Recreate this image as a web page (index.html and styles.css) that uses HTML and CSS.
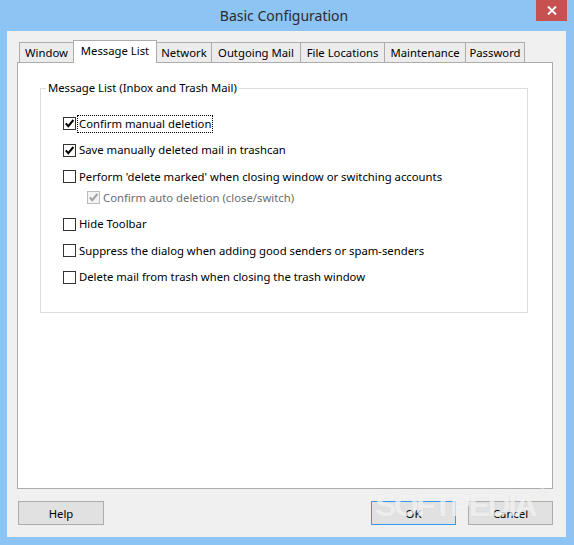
FILE: index.html
```html
<!DOCTYPE html>
<html>
<head>
<meta charset="utf-8">
<link rel="stylesheet" href="styles.css">
</head>
<body>
<div class="window">
  <div class="titlebar">
    <div class="title">Basic Configuration</div>
    <div class="close">
      <svg width="10" height="9" viewBox="0 0 10 9"><path d="M1 0.5 L9 8.5 M9 0.5 L1 8.5" stroke="#fff" stroke-width="2"/></svg>
    </div>
  </div>
  <div class="client">
    <div class="tabs">
      <div class="tab t-window">Window</div>
      <div class="tab selected t-msg">Message List</div>
      <div class="tab t-net">Network</div>
      <div class="tab t-out">Outgoing Mail</div>
      <div class="tab t-file">File Locations</div>
      <div class="tab t-maint">Maintenance</div>
      <div class="tab t-pass">Password</div>
    </div>
    <div class="panel">
      <fieldset class="group">
        <legend>Message List (Inbox and Trash Mail)</legend>
        <div class="rows">
          <div class="row">
            <span class="cb checked"><svg width="11" height="11" viewBox="0 0 11 11"><path d="M1.8 5.4 L4.3 8.2 L9.4 2" fill="none" stroke="#000" stroke-width="2"/></svg></span>
            <span class="label focus">Confirm manual deletion</span>
          </div>
          <div class="row">
            <span class="cb checked"><svg width="11" height="11" viewBox="0 0 11 11"><path d="M1.8 5.4 L4.3 8.2 L9.4 2" fill="none" stroke="#000" stroke-width="2"/></svg></span>
            <span class="label">Save manually deleted mail in trashcan</span>
          </div>
          <div class="row">
            <span class="cb"></span>
            <span class="label">Perform 'delete marked' when closing window or switching accounts</span>
          </div>
          <div class="row sub disabled">
            <span class="cb checked"><svg width="11" height="11" viewBox="0 0 11 11"><path d="M1.8 5.4 L4.3 8.2 L9.4 2" fill="none" stroke="#a3a3a3" stroke-width="2"/></svg></span>
            <span class="label">Confirm auto deletion (close/switch)</span>
          </div>
          <div class="row">
            <span class="cb"></span>
            <span class="label">Hide Toolbar</span>
          </div>
          <div class="row">
            <span class="cb"></span>
            <span class="label">Suppress the dialog when adding good senders or spam-senders</span>
          </div>
          <div class="row">
            <span class="cb"></span>
            <span class="label">Delete mail from trash when closing the trash window</span>
          </div>
        </div>
      </fieldset>
    </div>
    <div class="buttons">
      <button class="btn">Help</button>
      <div class="spacer"></div>
      <button class="btn default">OK</button>
      <button class="btn">Cancel</button>
    </div>
    <div class="watermark">SOFTPEDIA<sup>®</sup></div>
  </div>
</div>
</body>
</html>
```

FILE: styles.css
```css
* { box-sizing: border-box; }
html, body {
  margin: 0;
  padding: 0;
  width: 574px;
  height: 545px;
  overflow: hidden;
}
body {
  font-family: "Noto Sans", "Open Sans", sans-serif;
  font-size: 11.3px;
  color: #000;
}
.window {
  width: 574px;
  height: 545px;
  background: #8cc4f3;
  display: flex;
  flex-direction: column;
}
.titlebar {
  height: 31px;
  position: relative;
  display: flex;
  justify-content: center;
}
.title {
  font-size: 14px;
  color: #2b2b2b;
  line-height: 31px;
  margin-right: 6px;
}
.close {
  position: absolute;
  top: 0;
  left: 536px;
  width: 31px;
  height: 21px;
  background: #c75050;
  display: flex;
  align-items: center;
  justify-content: center;
}
.close svg { display: block; }
.client {
  position: relative;
  margin-left: 7px;
  width: 559px;
  height: 506px;
  background: #f0f0f0;
  padding: 9px 13px 0 10px;
  display: flex;
  flex-direction: column;
}
.tabs {
  display: flex;
  align-items: flex-end;
  padding-left: 2px;
  height: 22px;
  position: relative;
  z-index: 2;
}
.tab {
  height: 20px;
  border: 1px solid #acacac;
  border-bottom: none;
  background: #ececec;
  line-height: 19px;
  text-align: center;
  margin-left: -1px;
  white-space: nowrap;
}
.tab:first-child { margin-left: 0; }
.tab.selected {
  height: 23px;
  background: #fff;
  margin-bottom: -1px;
  line-height: 20px;
  position: relative;
  z-index: 3;
}
.t-window { width: 55px; }
.t-msg { width: 84px; }
.t-net { width: 56px; }
.t-out { width: 90px; }
.t-file { width: 85px; }
.t-maint { width: 82px; }
.t-pass { width: 60px; }
.panel {
  width: 536px;
  height: 427px;
  background: #fff;
  border: 1px solid #acacac;
  padding: 17px 0 0 22px;
  position: relative;
  z-index: 1;
}
.group {
  margin: 0;
  width: 488px;
  border: 1px solid #dcdcdc;
  padding: 19.5px 0 27px 5px;
}
.group legend {
  padding: 0 2px;
  line-height: 16px;
  color: #000;
}
.rows {
  margin-left: 17px;
  display: flex;
  flex-direction: column;
  gap: 10.5px;
}
.row {
  height: 16px;
  display: flex;
  align-items: center;
}
.row.sub {
  margin-top: -5.5px;
  padding-left: 24px;
}
.cb {
  width: 13px;
  height: 13px;
  border: 1px solid #333;
  background: #fff;
  display: flex;
  align-items: center;
  justify-content: center;
  flex-shrink: 0;
}
.cb svg { display: block; }
.disabled .cb {
  border-color: #bcbcbc;
  background: #f4f4f4;
}
.label {
  margin-left: 3px;
  white-space: nowrap;
  line-height: 16px;
}
.label.focus {
  outline: 1px dotted #000;
  outline-offset: 0;
  margin-left: 2px;
  padding: 0 1px;
}
.disabled .label { color: #6d6d6d; }
.buttons {
  display: flex;
  margin-top: 12px;
  height: 24px;
  padding-left: 1px;
}
.spacer { flex: 1; }
.btn {
  font-family: inherit;
  font-size: 11.3px;
  color: #000;
  width: 86px;
  height: 24px;
  background: #e1e1e1;
  border: 1px solid #adadad;
  padding: 0;
  margin: 0;
}
.btn.default {
  border-color: #3399ff;
  width: 85px;
  margin-right: 12px;
}
.btn + .btn { width: 85px; }
.watermark {
  position: absolute;
  left: 368px;
  top: 456px;
  font-family: "Liberation Sans", sans-serif;
  font-weight: bold;
  font-size: 32px;
  letter-spacing: -2.6px;
  color: rgba(255,255,255,0.6);
  text-shadow: 0 0 1px rgba(190,190,190,0.35);
  pointer-events: none;
  z-index: 5;
  white-space: nowrap;
}
.watermark sup { font-size: 10px; vertical-align: top; margin-left: 4px; }
```
